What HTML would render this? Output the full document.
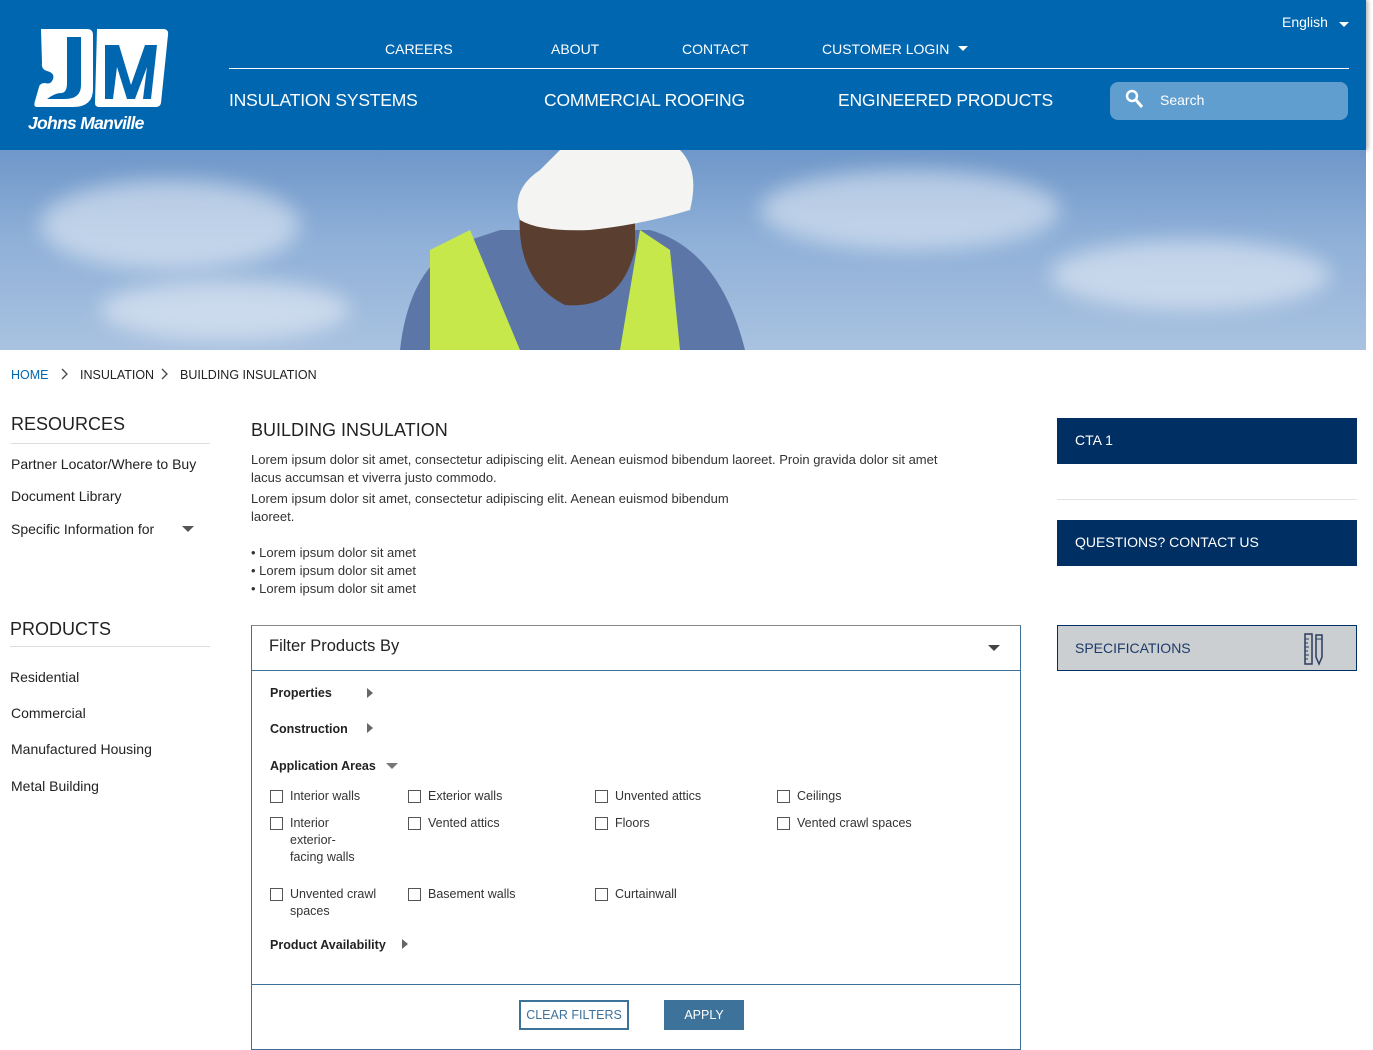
<!DOCTYPE html>
<html><head><meta charset="utf-8"><style>
*{margin:0;padding:0;box-sizing:border-box}
body{width:1373px;height:1050px;overflow:hidden;background:#fff;font-family:"Liberation Sans",sans-serif;color:#222;position:relative}
.a{position:absolute;white-space:nowrap}
.hdr{position:absolute;left:0;top:0;width:1366px;height:150px;background:#0066b0;box-shadow:2px 0 4px rgba(0,0,0,.3)}
.w{color:#fff}
.hero{position:absolute;left:0;top:150px;width:1366px;height:200px;background:linear-gradient(180deg,#6f97c9 0%,#8fb0d8 45%,#a9c2e0 100%);overflow:hidden}
.cl{position:absolute;border-radius:50%;background:rgba(255,255,255,.45);filter:blur(10px)}
.cb{position:absolute;left:1057px;width:300px;height:46px;background:#002f63;color:#fff;font-size:14px;padding:14px 18px}
.cbx{position:absolute;width:13px;height:13px;border:1px solid #555;background:#fff}
.lbl{position:absolute;font-size:12.5px;color:#333;line-height:17px}
.b{font-weight:bold;font-size:12.5px}
.tri{width:0;height:0;border-top:5px solid transparent;border-bottom:5px solid transparent;border-left:6px solid #666}
.dn{width:0;height:0;border-left:6px solid transparent;border-right:6px solid transparent;border-top:6px solid #555}
.nav{font-size:17.5px;letter-spacing:-0.2px}
</style></head><body>
<div class="hdr">
 <svg class="a" style="left:27px;top:27px" width="143" height="106" viewBox="0 0 143 106">
  <path d="M14 2 H60 Q66 2 66 8 V62 Q66 80 46 80 H10 Q6 80 8 74 L12 60 Q13 56 18 56 Q24 58 26 52 Q28 46 20 44 Q14 42 15 36 Z" fill="#fff"/>
  <path d="M70 2 H136 Q142 2 141 8 L134 76 Q133 80 129 80 H72 Q68 80 68 76 Z" fill="#fff"/>
  <path d="M40 10 H54 V58 Q54 72 38 72 H20 Q28 66 34 66 Q40 66 40 56 Z" fill="#0066b0"/>
  <path d="M78 18 H92 L104 58 L118 18 H130 L124 72 H116 L120 40 L108 72 H100 L90 40 L86 72 H78 Z" fill="#0066b0"/>
  <text x="1" y="102" font-family="Liberation Sans" font-style="italic" font-weight="bold" font-size="17.5" fill="#fff" letter-spacing="-0.7">Johns Manville</text>
 </svg>
 <div class="a w" style="left:1282px;top:14px;font-size:14px">English</div>
 <div class="a" style="left:1339px;top:22px;border-left:5px solid transparent;border-right:5px solid transparent;border-top:5px solid #fff"></div>
 <div class="a w" style="left:385px;top:41px;font-size:14px">CAREERS</div>
 <div class="a w" style="left:551px;top:41px;font-size:14px">ABOUT</div>
 <div class="a w" style="left:682px;top:41px;font-size:14px">CONTACT</div>
 <div class="a w" style="left:822px;top:41px;font-size:14px">CUSTOMER LOGIN</div>
 <div class="a" style="left:958px;top:46px;border-left:5px solid transparent;border-right:5px solid transparent;border-top:5px solid #fff"></div>
 <div class="a" style="left:229px;top:68px;width:1120px;height:1px;background:#fff"></div>
 <div class="a w nav" style="left:229px;top:90px">INSULATION SYSTEMS</div>
 <div class="a w nav" style="left:544px;top:90px">COMMERCIAL ROOFING</div>
 <div class="a w nav" style="left:838px;top:90px">ENGINEERED PRODUCTS</div>
 <div class="a" style="left:1110px;top:82px;width:238px;height:38px;background:#5f9ece;border-radius:8px"></div>
 <svg class="a" style="left:1124px;top:88px" width="22" height="24" viewBox="0 0 22 24"><circle cx="8" cy="8" r="5" fill="none" stroke="#fff" stroke-width="2.5"/><path d="M11.5 11.5 L18 19" stroke="#fff" stroke-width="3"/></svg>
 <div class="a w" style="left:1160px;top:92px;font-size:14px">Search</div>
</div>
<div class="hero">
 <div class="cl" style="left:40px;top:30px;width:260px;height:90px"></div>
 <div class="cl" style="left:760px;top:20px;width:300px;height:80px"></div>
 <div class="cl" style="left:1050px;top:90px;width:280px;height:70px"></div>
 <div class="cl" style="left:100px;top:130px;width:250px;height:60px"></div>
 <svg class="a" style="left:390px;top:0" width="370" height="200" viewBox="0 0 370 200">
  <path d="M10 200 Q20 110 80 90 L110 80 L260 80 Q330 100 355 200 Z" fill="#5c76a8"/>
  <path d="M40 200 L40 100 L80 80 L130 200 Z" fill="#c7e84a"/>
  <path d="M230 200 L250 80 L280 100 L290 200 Z" fill="#c7e84a"/>
  <path d="M130 60 Q125 130 175 155 Q230 160 245 100 L245 50 L140 50 Z" fill="#5a3e30"/>
  <path d="M130 70 Q120 40 150 20 L170 0 L290 0 Q310 20 300 60 Q250 75 200 80 Q150 82 130 70 Z" fill="#f4f4f2"/>
 </svg>
</div>
<div class="a" style="left:11px;top:368px;font-size:12.5px;color:#0066b0">HOME</div>
<svg class="a" style="left:60px;top:368px" width="8" height="12"><path d="M2 1 L7 6 L2 11" fill="none" stroke="#444" stroke-width="1.3"/></svg>
<div class="a" style="left:80px;top:368px;font-size:12.5px">INSULATION</div>
<svg class="a" style="left:160px;top:368px" width="8" height="12"><path d="M2 1 L7 6 L2 11" fill="none" stroke="#444" stroke-width="1.3"/></svg>
<div class="a" style="left:180px;top:368px;font-size:12.5px">BUILDING INSULATION</div>

<div class="a" style="left:11px;top:414px;font-size:18px">RESOURCES</div>
<div class="a" style="left:11px;top:443px;width:199px;height:1px;background:#ddd"></div>
<div class="a" style="left:11px;top:456px;font-size:14px">Partner Locator/Where to Buy</div>
<div class="a" style="left:11px;top:488px;font-size:14px">Document Library</div>
<div class="a" style="left:11px;top:521px;font-size:14px">Specific Information for</div>
<div class="a dn" style="left:182px;top:526px"></div>
<div class="a" style="left:10px;top:619px;font-size:18px">PRODUCTS</div>
<div class="a" style="left:10px;top:646px;width:200px;height:1px;background:#ddd"></div>
<div class="a" style="left:10px;top:669px;font-size:14px">Residential</div>
<div class="a" style="left:11px;top:705px;font-size:14px">Commercial</div>
<div class="a" style="left:11px;top:741px;font-size:14px">Manufactured Housing</div>
<div class="a" style="left:11px;top:778px;font-size:14px">Metal Building</div>

<div class="a" style="left:251px;top:420px;font-size:18px">BUILDING INSULATION</div>
<div class="a" style="left:251px;top:451px;font-size:13px;line-height:18px;white-space:normal;width:700px;color:#333">Lorem ipsum dolor sit amet, consectetur adipiscing elit. Aenean euismod bibendum laoreet. Proin gravida dolor sit amet lacus accumsan et viverra justo commodo.</div>
<div class="a" style="left:251px;top:490px;font-size:13px;line-height:18px;white-space:normal;width:520px;color:#333">Lorem ipsum dolor sit amet, consectetur adipiscing elit. Aenean euismod bibendum laoreet.</div>
<div class="a" style="left:251px;top:544px;font-size:13px;line-height:18px;color:#333">• Lorem ipsum dolor sit amet<br>• Lorem ipsum dolor sit amet<br>• Lorem ipsum dolor sit amet</div>

<div class="cb" style="top:418px">CTA 1</div>
<div class="a" style="left:1057px;top:499px;width:300px;height:1px;background:#e2e2e2"></div>
<div class="cb" style="top:520px">QUESTIONS? CONTACT US</div>
<div class="a" style="left:1057px;top:625px;width:300px;height:46px;background:#cbcfd1;border:1px solid #002f63;color:#1c3a6b;font-size:14px;padding:14px 17px">SPECIFICATIONS</div>
<svg class="a" style="left:1303px;top:632px" width="26" height="34" viewBox="0 0 26 34"><rect x="2" y="2" width="7" height="30" fill="none" stroke="#2a3d5c" stroke-width="1.5"/><path d="M2 7h4M2 11h3M2 15h4M2 19h3M2 23h4M2 27h3" stroke="#2a3d5c"/><path d="M13 3h6v22l-3 7-3-7z" fill="none" stroke="#2a3d5c" stroke-width="1.5"/><path d="M13 7h6" stroke="#2a3d5c"/></svg>

<div class="a" style="left:251px;top:625px;width:770px;height:425px;border:1px solid #3d6f97;border-top-color:#888"></div>
<div class="a" style="left:252px;top:670px;width:768px;height:1px;background:#3d6f97"></div>
<div class="a" style="left:269px;top:637px;font-size:16.5px">Filter Products By</div>
<div class="a dn" style="left:988px;top:645px;border-top-color:#444"></div>
<div class="a b" style="left:270px;top:686px">Properties</div><div class="a tri" style="left:367px;top:688px"></div>
<div class="a b" style="left:270px;top:722px">Construction</div><div class="a tri" style="left:367px;top:723px"></div>
<div class="a b" style="left:270px;top:759px">Application Areas</div><div class="a dn" style="left:386px;top:763px;border-top-color:#777"></div>

<div class="cbx" style="left:270px;top:790px"></div><div class="lbl" style="left:290px;top:788px">Interior walls</div>
<div class="cbx" style="left:408px;top:790px"></div><div class="lbl" style="left:428px;top:788px">Exterior walls</div>
<div class="cbx" style="left:595px;top:790px"></div><div class="lbl" style="left:615px;top:788px">Unvented attics</div>
<div class="cbx" style="left:777px;top:790px"></div><div class="lbl" style="left:797px;top:788px">Ceilings</div>
<div class="cbx" style="left:270px;top:817px"></div><div class="lbl" style="left:290px;top:815px">Interior<br>exterior-<br>facing walls</div>
<div class="cbx" style="left:408px;top:817px"></div><div class="lbl" style="left:428px;top:815px">Vented attics</div>
<div class="cbx" style="left:595px;top:817px"></div><div class="lbl" style="left:615px;top:815px">Floors</div>
<div class="cbx" style="left:777px;top:817px"></div><div class="lbl" style="left:797px;top:815px">Vented crawl spaces</div>
<div class="cbx" style="left:270px;top:888px"></div><div class="lbl" style="left:290px;top:886px">Unvented crawl<br>spaces</div>
<div class="cbx" style="left:408px;top:888px"></div><div class="lbl" style="left:428px;top:886px">Basement walls</div>
<div class="cbx" style="left:595px;top:888px"></div><div class="lbl" style="left:615px;top:886px">Curtainwall</div>
<div class="a b" style="left:270px;top:938px">Product Availability</div><div class="a tri" style="left:402px;top:939px"></div>

<div class="a" style="left:252px;top:984px;width:768px;height:1px;background:#3d6f97"></div>
<div class="a" style="left:519px;top:1000px;width:110px;height:30px;border:2px solid #3d729a;color:#3d729a;font-size:12.5px;text-align:center;line-height:26px">CLEAR FILTERS</div>
<div class="a" style="left:664px;top:1000px;width:80px;height:30px;background:#3d729a;color:#fff;font-size:12.5px;text-align:center;line-height:30px">APPLY</div>
</body></html>
